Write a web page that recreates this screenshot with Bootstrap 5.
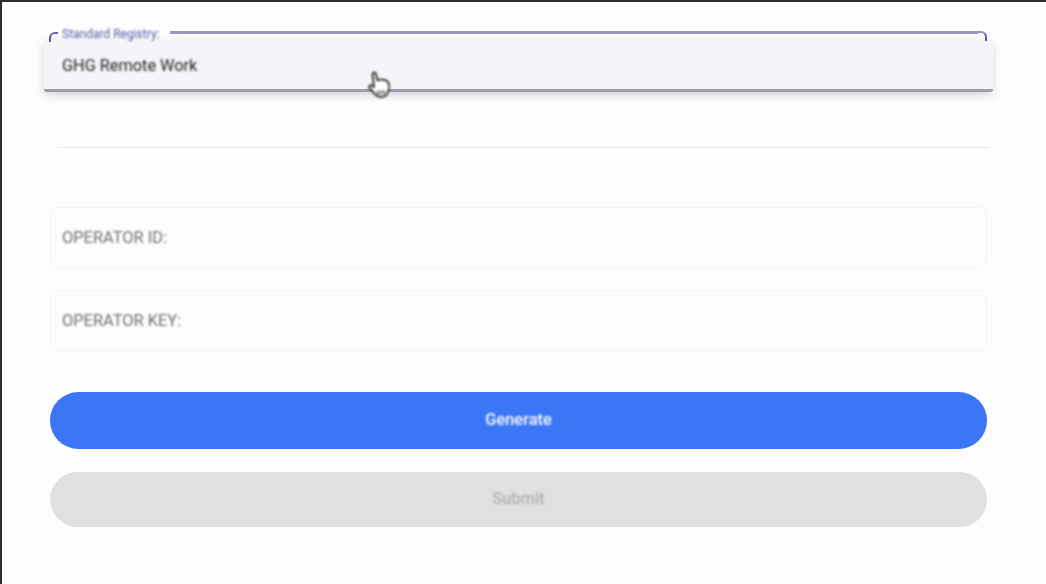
<!DOCTYPE html>
<html lang="en">
<head>
    <meta charset="UTF-8">
    <meta name="viewport" content="width=device-width, initial-scale=1.0">
    <title>Standard Registry</title>
    <link href="https://cdn.jsdelivr.net/npm/bootstrap@5.3.0/dist/css/bootstrap.min.css" rel="stylesheet">
    <style>
        html, body { height: 100%; }
        body {
            background: #fdfdfd;
            font-family: Roboto, "Liberation Sans", sans-serif;
            overflow: hidden;
        }
        .page-frame {
            height: 584px;
            border-top: 2px solid #2e2e2e;
            border-left: 2px solid #2e2e2e;
            padding: 29px 59px 0 48px;
        }
        /* selected registry field */
        .registry-field { position: relative; height: 60px; }
        .outline-top { height: 10px; align-items: flex-start; }
        .corner-left, .corner-right { height: 10px; }
        .corner-left { width: 9px; margin: 1px 0 0 -1px; border-top: 2px solid #6d66b4; border-left: 2px solid #5e57ae; border-top-left-radius: 6px; }
        .corner-right { width: 9px; border-top: 2px solid #958fc2; border-right: 2px solid #5e57ae; border-top-right-radius: 6px; }
        .outline-line { height: 3px; background: #9a94c4; }
        .registry-label { font-size: 12px; line-height: 14px; color: #5358a8; padding: 0 10px 0 4px; margin-top: -4px; filter: blur(.8px); }
        .registry-panel {
            margin: -1px -6px 0 -6px;
            height: 52px;
            padding: 15px 0 0 18px;
            background: #f5f4f8;
            border-bottom: 3px solid #a09bb0;
            border-radius: 3px;
            box-shadow: 0 3px 8px rgba(0, 0, 0, .16);
            font-size: 16.3px;
            line-height: 22px;
            color: #222;
        }
        .registry-panel span { filter: blur(.8px); display: inline-block; }
        .hand-cursor { position: absolute; left: 318px; top: 40px; filter: blur(.8px); }
        .soft-rule { margin: 56px 0 0 7px; width: 932px; border: 0; border-top: 1px solid #e6eaea; opacity: 1; }
        .operator-box {
            height: 61px;
            padding: 2px 0 0 11px;
            border: 1px solid #f5f5f6;
            border-radius: 8px;
            font-size: 16.4px;
            color: #6e6e6e;
        }
        .operator-box span { filter: blur(.9px); }
        .box-first { margin-top: 59px; }
        .box-next { margin-top: 22px; }
        .action-btn {
            display: block;
            border: 0;
            font-size: 16.4px;
            font-weight: 500;
        }
        .action-btn span { filter: blur(.8px); display: inline-block; }
        .btn-generate { height: 57px; margin-top: 41px; background: #3a76f6; color: #fff; }
        .btn-generate:hover { background: #3a76f6; color: #fff; }
        .btn-send { height: 55px; margin-top: 23px; background: #e0e0e2; color: #b0b0b2; opacity: 1; }
        .btn-send:disabled { background: #e0e0e2; color: #b0b0b2; opacity: 1; }
    </style>
</head>
<body>
    <div class="page-frame">
        <div class="registry-field">
            <div class="outline-top d-flex">
                <div class="corner-left flex-shrink-0"></div>
                <div class="registry-label flex-shrink-0">Standard Registry:</div>
                <div class="outline-line flex-grow-1"></div>
                <div class="corner-right flex-shrink-0"></div>
            </div>
            <div class="registry-panel"><span>GHG Remote Work</span></div>
            <!-- cursor -->
            <svg class="hand-cursor" width="22" height="28" viewBox="0 0 22 28" fill="#fff" stroke="#333" stroke-width="1.9" stroke-linejoin="round" stroke-linecap="round">
                <path d="M4.500 3c0-2 3-2 3.500 0l1.500 6.500c3-1.500 9-1 10.500 1.500 1.500 3 1 8-.5 11-1 2.500-3 4-6 4-3 0-5-1-6.500-3L1.500 17c-1.200-1.500.5-3.500 2.500-2.500l2 1.500z"/>
                <path d="M10 20v3M13 20v3M16 20v3" stroke-width="1.400"/>
            </svg>
        </div>

        <hr class="soft-rule">

        <div class="operator-box box-first d-flex align-items-center"><span>OPERATOR ID:</span></div>
        <div class="operator-box box-next d-flex align-items-center"><span>OPERATOR KEY:</span></div>

        <button type="button" class="btn rounded-pill w-100 action-btn btn-generate"><span>Generate</span></button>
        <button type="button" class="btn rounded-pill w-100 action-btn btn-send" disabled><span>Submit</span></button>
    </div>

    <script src="https://cdn.jsdelivr.net/npm/bootstrap@5.3.0/dist/js/bootstrap.bundle.min.js"></script>
</body>
</html>
